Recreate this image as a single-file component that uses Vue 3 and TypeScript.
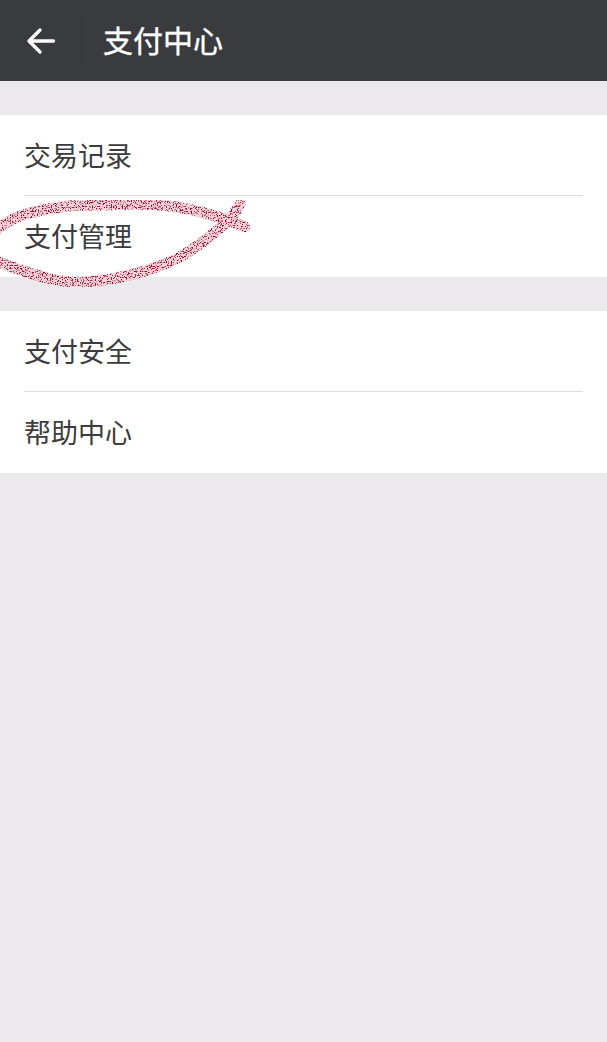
<script setup lang="ts">
const groups: string[][] = [
  ['交易记录', '支付管理'],
  ['支付安全', '帮助中心'],
]
</script>

<template>
  <div class="page">
    <header class="bar">
      <svg class="back" width="30" height="28" viewBox="0 0 30 28" fill="none" stroke="#fff" stroke-width="3.3" stroke-linecap="round" stroke-linejoin="round">
        <path d="M27.5 14H3.5M14 3L3 14L14 25" />
      </svg>
      <span class="sep"></span>
      <h1 class="title">支付中心</h1>
    </header>
    <main class="content">
      <section v-for="(g, i) in groups" :key="i" class="group">
        <div v-for="t in g" :key="t" class="row"><span class="label">{{ t }}</span></div>
      </section>
    </main>
    <svg class="scribble" width="260" height="105" viewBox="0 190 260 105" fill="none">
      <defs>
        <filter id="speck" x="-5%" y="-5%" width="110%" height="110%" color-interpolation-filters="sRGB">
          <feTurbulence type="fractalNoise" baseFrequency="0.8" numOctaves="2" seed="7" result="n" />
          <feColorMatrix in="n" type="matrix" values="0 0 0 0 0.58  0 0 0 0 0.06  0 0 0 0 0.18  0 0 0 7 -3.7" result="dots" />
          <feComposite in="dots" in2="SourceGraphic" operator="in" result="cut" />
          <feMerge>
            <feMergeNode in="SourceGraphic" />
            <feMergeNode in="cut" />
          </feMerge>
        </filter>
      </defs>
      <g filter="url(#speck)" stroke="#f5d2d9" stroke-width="11" stroke-linecap="round">
        <path d="M-4 230C8 220 18 216 30 213C55 206 75 205 100 205C125 204 145 204 160 205C180 207 200 211 215 216C227 220 238 224 245 227" />
        <path d="M240 204C234 215 226 224 215 232C204 242 192 250 180 257C163 266 147 271 130 275C110 280 90 283 70 282C55 281 42 277 30 273C18 269 8 266 -4 261" />
      </g>
    </svg>
  </div>
</template>

<style>
html, body { margin: 0; background: #ebe9ec; }
</style>

<style scoped>
.page {
  position: relative;
  width: 607px;
  height: 1042px;
  overflow: hidden;
  background: #ebe9ec;
  font-family: "Noto Sans CJK SC", "Noto Sans", sans-serif;
}
.bar {
  height: 81px;
  display: flex;
  align-items: center;
  background: #3a3b3f;
  box-sizing: border-box;
  padding-left: 26px;
}
.back { flex: none; }
.sep {
  width: 1px;
  height: 42px;
  margin: 0 21px 0 25px;
  background: #313236;
}
.title {
  margin: 0 0 3px;
  font-size: 30px;
  font-weight: 400;
  line-height: 1;
  color: #fff;
  -webkit-text-stroke: 0.4px #fff;
}
.content {
  display: flex;
  flex-direction: column;
  gap: 34px;
  padding-top: 34px;
}
.group { background: #fff; }
.row {
  height: 80px;
  display: flex;
  align-items: center;
  margin: 0 24px;
  padding-bottom: 2px;
  box-sizing: border-box;
}
.row + .row {
  height: 82px;
  border-top: 1px solid #dddcdd;
  padding-bottom: 3px;
}
.label {
  font-size: 27px;
  line-height: 1;
  color: #3c3c40;
}
.scribble {
  position: absolute;
  left: 0;
  top: 190px;
}
</style>
